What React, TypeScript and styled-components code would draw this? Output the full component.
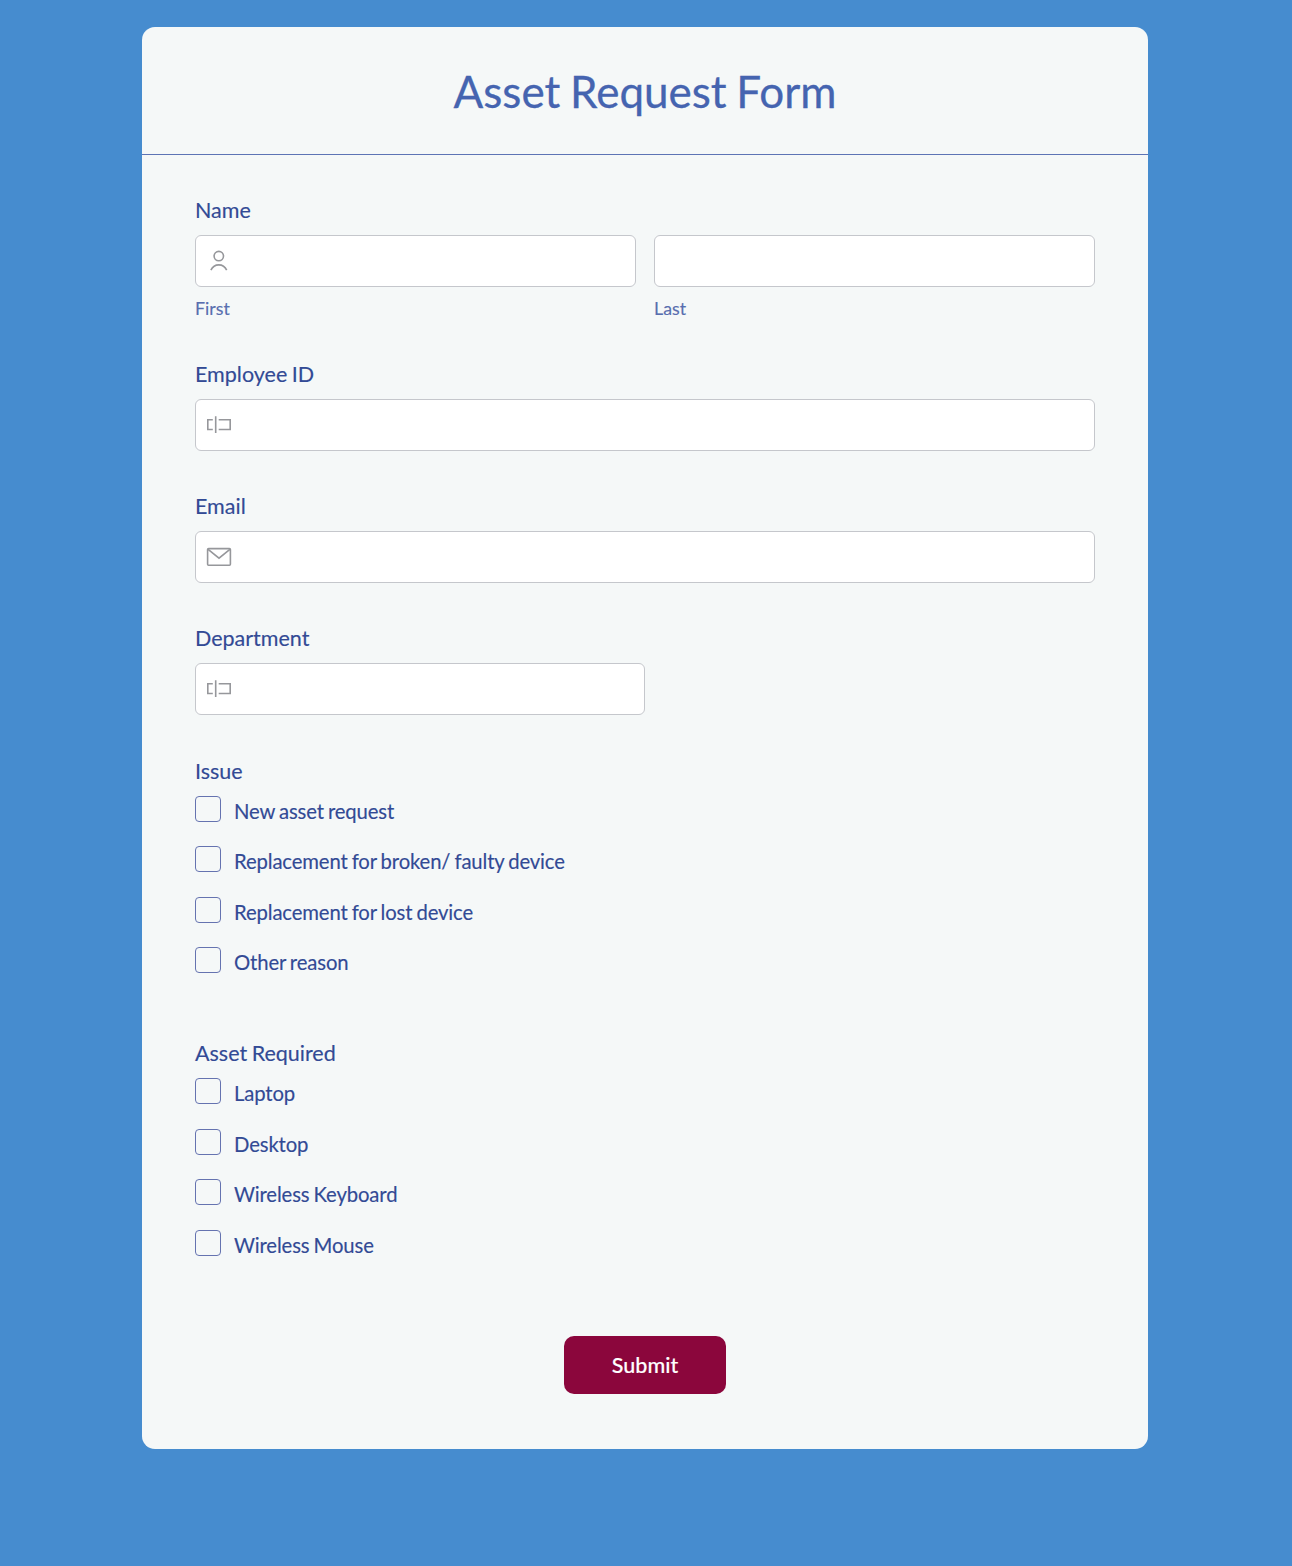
import React from "react";
import styled, { createGlobalStyle } from "styled-components";

const GlobalStyle = createGlobalStyle`
  *, *::before, *::after { box-sizing: border-box; }
  body {
    margin: 0;
    background: #468ccf;
    font-family: Lato, "Liberation Sans", sans-serif;
    color: #324a95;
    word-spacing: -1px;
    -webkit-text-stroke: 0.15px currentColor;
  }
`;

const Page = styled.main`
  display: flex;
  justify-content: center;
  align-items: flex-start;
  min-height: 1566px;
  padding: 27px 2px 0 0;
`;

const Card = styled.form`
  display: flex;
  flex-direction: column;
  width: 1006px;
  height: 1422px;
  border-radius: 13px;
  background: #f5f8f8;
`;

const Header = styled.header`
  display: flex;
  align-items: center;
  justify-content: center;
  height: 128px;
  border-bottom: 1px solid #5d74b5;
`;

const Title = styled.h1`
  margin: 1px 0 0;
  font-size: 44px;
  line-height: 60px;
  font-weight: 400;
  word-spacing: -1.5px;
  color: #4564b0;
  -webkit-text-stroke-width: 0.3px;
`;

const Body = styled.div`
  display: flex;
  flex-direction: column;
  padding: 40px 53px 0;
`;

const Field = styled.section<{ $height: number }>`
  display: flex;
  flex-direction: column;
  height: ${(p) => p.$height}px;
`;

const Label = styled.label`
  height: 40px;
  font-size: 21.5px;
  line-height: 30px;
  font-weight: 400;
`;

const NameRow = styled.div`
  display: grid;
  grid-template-columns: 1fr 1fr;
  gap: 18px;
`;

const NamePart = styled.div`
  display: flex;
  flex-direction: column;
`;

const InputBox = styled.div<{ $half?: boolean }>`
  display: flex;
  align-items: center;
  width: ${(p) => (p.$half ? "450px" : "100%")};
  height: 52px;
  padding-left: 10px;
  border: 1px solid #c5c7cc;
  border-radius: 6px;
  background: #fff;
`;

const Input = styled.input`
  flex: 1;
  min-width: 0;
  height: 100%;
  border: 0;
  outline: 0;
  background: transparent;
  font: inherit;
  font-size: 20px;
`;

const SubLabel = styled.span`
  margin-top: 8px;
  font-size: 17.8px;
  line-height: 26px;
  color: #586eaf;
`;

const Glyph = styled.svg`
  flex: none;
  width: 26px;
  height: 26px;
  fill: none;
  stroke: #96979b;
  stroke-width: 1.6;
`;

const Option = styled.label`
  display: flex;
  height: 50.45px;
  gap: 13px;
  font-size: 20.3px;
  letter-spacing: -0.13px;
  line-height: 30.6px;
`;

const Checkbox = styled.input`
  appearance: none;
  flex: none;
  width: 26px;
  height: 26px;
  margin: 0;
  border: 1px solid #6573b0;
  border-radius: 4px;
  background: transparent;
`;

const Submit = styled.button`
  align-self: center;
  width: 162px;
  height: 58px;
  padding: 1px 0 0;
  border: 0;
  border-radius: 10px;
  background: #8b063c;
  color: #fff;
  font: 500 21.5px/30px Lato, "Liberation Sans", sans-serif;
`;

const PersonIcon = () => (
  <Glyph viewBox="0 0 26 26">
    <circle cx="12.8" cy="8.1" r="4.7" />
    <path d="M4.9 22.2C6.6 18.6 9.4 16.9 12.8 16.9s6.2 1.7 7.9 5.3" />
  </Glyph>
);

const TextIcon = () => (
  <Glyph viewBox="0 0 26 26">
    <path d="M6.8 7.7H1.8v9.8h5M9.7 4.3v16.6M12.7 7.7h11.5v9.8H12.7" />
  </Glyph>
);

const MailIcon = () => (
  <Glyph viewBox="0 0 26 26">
    <rect x="1.6" y="4.6" width="22.8" height="16.6" rx="1" />
    <path d="M1.8 5.1 13 14.2 24.2 5.1" />
  </Glyph>
);

const issues = [
  "New asset request",
  "Replacement for broken/ faulty device",
  "Replacement for lost device",
  "Other reason",
];
const assets = ["Laptop", "Desktop", "Wireless Keyboard", "Wireless Mouse"];

const OptionGroup = ({ title, options, height }: { title: string; options: string[]; height: number }) => (
  <Field $height={height}>
    <Label as="div">{title}</Label>
    {options.map((option) => (
      <Option key={option}>
        <Checkbox type="checkbox" />
        {option}
      </Option>
    ))}
  </Field>
);

export default function App() {
  return (
    <>
      <GlobalStyle />
      <Page>
        <Card>
          <Header>
            <Title>Asset Request Form</Title>
          </Header>
          <Body>
            <Field $height={164}>
              <Label htmlFor="first">Name</Label>
              <NameRow>
                <NamePart>
                  <InputBox>
                    <PersonIcon />
                    <Input id="first" />
                  </InputBox>
                  <SubLabel>First</SubLabel>
                </NamePart>
                <NamePart>
                  <InputBox>
                    <Input id="last" />
                  </InputBox>
                  <SubLabel>Last</SubLabel>
                </NamePart>
              </NameRow>
            </Field>
            <Field $height={132.2}>
              <Label htmlFor="employee">Employee ID</Label>
              <InputBox>
                <TextIcon />
                <Input id="employee" />
              </InputBox>
            </Field>
            <Field $height={132.2}>
              <Label htmlFor="email">Email</Label>
              <InputBox>
                <MailIcon />
                <Input id="email" />
              </InputBox>
            </Field>
            <Field $height={132.4}>
              <Label htmlFor="department">Department</Label>
              <InputBox $half>
                <TextIcon />
                <Input id="department" />
              </InputBox>
            </Field>
            <OptionGroup title="Issue" options={issues} height={282.6} />
            <OptionGroup title="Asset Required" options={assets} height={297.6} />
            <Submit type="button">Submit</Submit>
          </Body>
        </Card>
      </Page>
    </>
  );
}
